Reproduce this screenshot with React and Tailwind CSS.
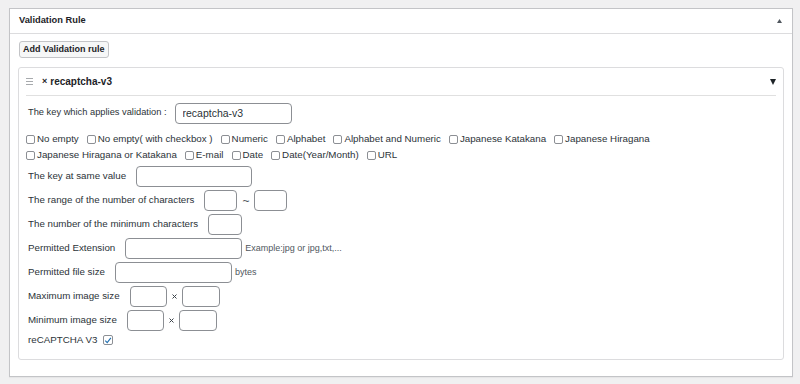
import React from "react";

const Box = ({ checked }) => (
  <span
    className={`flex shrink-0 items-center justify-center rounded-[2px] border border-[#8c8f94] bg-white ${
      checked ? "h-[10px] w-[10px]" : "h-[9px] w-[9px]"
    }`}
  >
    {checked && (
      <svg width="9" height="9" viewBox="0 0 10 10">
        <path d="M1.6 5.2 L4 7.6 L8.6 1.8" fill="none" stroke="#2271b1" strokeWidth="1.5" />
      </svg>
    )}
  </span>
);

const Check = ({ label }) => (
  <span className="mr-[8px] flex items-center">
    <Box />
    <span className="ml-[2px]">{label}</span>
  </span>
);

const Field = ({ className, value }) => (
  <input
    readOnly
    defaultValue={value}
    className={`block h-[21px] rounded-[4px] border border-[#8c8f94] bg-white px-[7px] text-[10.5px] text-[#2c3338] outline-none ${className}`}
  />
);

const Row = ({ label, children }) => (
  <div className="mt-[3px] flex h-[21px] items-center">
    <span className="mr-[10px]">{label}</span>
    {children}
  </div>
);

const Times = () => (
  <svg className="mx-[5px]" width="5" height="5" viewBox="0 0 5 5">
    <path d="M0.5 0.5 L4.5 4.5 M4.5 0.5 L0.5 4.5" stroke="#3c434a" strokeWidth="1" />
  </svg>
);

const row1 = [
  "No empty",
  "No empty( with checkbox )",
  "Numeric",
  "Alphabet",
  "Alphabet and Numeric",
  "Japanese Katakana",
  "Japanese Hiragana",
];
const row2 = ["Japanese Hiragana or Katakana", "E-mail", "Date", "Date(Year/Month)", "URL"];

export default function App() {
  return (
    <div className="h-[384px] w-[800px] overflow-hidden bg-[#f0f0f1] pt-[8px] pl-[9px] font-['Liberation_Sans','Noto_Sans_CJK_JP',sans-serif] text-[9.75px] text-[#2c3338]">
      <div className="w-[784px] border border-[#c3c4c7] bg-white shadow-[0_1px_1px_rgba(0,0,0,0.04)]">
        {/* panel header */}
        <div className="flex h-[25px] items-center justify-between border-b border-[#dcdcde] pl-[9px] pr-[10px]">
          <span className="text-[9.3px] font-bold text-[#1d2327]">Validation Rule</span>
          <svg width="5" height="4" viewBox="0 0 5 4">
            <path d="M2.5 0 L5 4 L0 4 Z" fill="#50575e" />
          </svg>
        </div>

        <div className="px-[8px] pt-[7px] pb-[16px]">
          <button className="ml-[1px] flex h-[17px] items-center rounded-[3px] border border-[#c3c4c7] bg-[#f6f7f7] px-[3px] text-[9px] font-bold text-[#1d2327]">
            Add Validation rule
          </button>

          {/* rule card */}
          <div className="mt-[9px] rounded-[3px] border border-[#dcdcde] bg-white">
            <div className="mx-[7px] flex h-[28px] items-center border-b border-[#e0e0e0]">
              <svg width="7" height="7" viewBox="0 0 7 7">
                <path d="M0 0.5 H7 M0 3.5 H7 M0 6.5 H7" stroke="#a7aaad" strokeWidth="1" />
              </svg>
              <span className="ml-[9px] text-[9px] font-bold text-[#1d2327]">×</span>
              <span className="ml-[3px] text-[10px] font-bold text-[#1d2327]">recaptcha-v3</span>
              <svg className="ml-auto" width="6" height="6" viewBox="0 0 6 6">
                <path d="M0 0 H6 L3 6 Z" fill="#1d2327" />
              </svg>
            </div>

            <div className="px-[9px] pt-[7px] pb-[12px]">
              <div className="flex h-[20px] items-center">
                <span className="text-[9.3px]">The key which applies validation :</span>
                <Field className="ml-[8px] h-[20px] w-[117px]" value="recaptcha-v3" />
              </div>

              <div className="mt-[8px] -ml-[2px]">
                <div className="flex h-[16px] items-center">
                  {row1.map((l) => (
                    <Check key={l} label={l} />
                  ))}
                </div>
                <div className="flex h-[16px] items-center">
                  {row2.map((l) => (
                    <Check key={l} label={l} />
                  ))}
                </div>
              </div>

              <div className="mt-[2px]">
                <Row label="The key at same value">
                  <Field className="w-[116px]" />
                </Row>
                <Row label="The range of the number of characters">
                  <Field className="w-[33px]" />
                  <span className="mx-[5px] text-[12px] leading-none text-[#50575e]">~</span>
                  <Field className="w-[33px]" />
                </Row>
                <Row label="The number of the minimum characters">
                  <Field className="w-[34px]" />
                </Row>
                <Row label="Permitted Extension">
                  <Field className="w-[117px]" />
                  <span className="ml-[3px] text-[9px] text-[#50575e]">Example:jpg or jpg,txt,...</span>
                </Row>
                <Row label="Permitted file size">
                  <Field className="w-[117px]" />
                  <span className="ml-[3px] text-[9px] text-[#50575e]">bytes</span>
                </Row>
                <Row label="Maximum image size">
                  <Field className="w-[37px]" />
                  <Times />
                  <Field className="w-[38px]" />
                </Row>
                <Row label="Minimum image size">
                  <Field className="w-[37px]" />
                  <Times />
                  <Field className="w-[38px]" />
                </Row>
              </div>

              <div className="mt-[2px] flex h-[14px] items-center">
                <span>reCAPTCHA V3</span>
                <span className="ml-[6px]">
                  <Box checked />
                </span>
              </div>
            </div>
          </div>
        </div>
      </div>
    </div>
  );
}
